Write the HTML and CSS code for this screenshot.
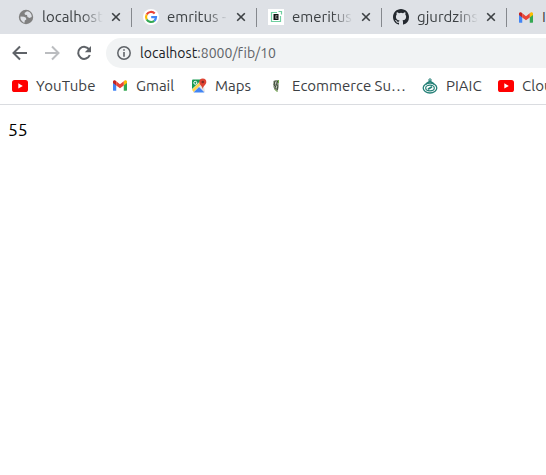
FILE: index.html
```html
<!DOCTYPE html>
<html lang="en">
<head>
<meta charset="utf-8">
<title>localhost:8000/fib/10</title>
<link rel="stylesheet" href="styles.css">
</head>
<body>
<svg width="0" height="0" class="defs">
  <symbol id="close" viewBox="0 0 10 10"><path d="M1.2 1.2l7.6 7.6M8.8 1.2L1.2 8.8" fill="none" stroke="#3c4043" stroke-width="1.600"/></symbol>
  <symbol id="gmail" viewBox="0 0 16 12"><path d="M0 1.5V11a1 1 0 0 0 1 1h2.7V4z" fill="#4285f4"/><path d="M16 1.5V11a1 1 0 0 1-1 1h-2.700V4z" fill="#34a853"/><path d="M12.300 1.200V6L16 3.200V1.700C16 .1 14.200-.5 13 .5z" fill="#fbbc04"/><path d="M0 3.200L3.700 6V1.200L3 .5C1.800-.5 0 .1 0 1.700z" fill="#c5221f"/><path d="M3.700 1.200V6L8 9.200 12.300 6V1.200L8 4.500z" fill="#ea4335"/></symbol>
  <symbol id="youtube" viewBox="0 0 16 12"><rect width="16" height="12" rx="2.600" fill="#f00"/><path d="M6.300 3.300v5.200L10.800 6z" fill="#fff"/></symbol>
</svg>
<div class="tabs">
  <div class="tab">
    <svg class="fav" viewBox="0 0 16 16"><circle cx="8" cy="8" r="7.200" fill="#808080"/><path d="M2.500 7.500L6 7.800l2 1 .3 1.700-1.500 1-.3 2.300C3.800 13 2 10 2.500 7.500z M9 2.300L6.500 4l.5 1.800 2 .2.500 2 2 1 2.200-1C14 5 11.500 2.500 9 2.300z" fill="#dee1e6"/></svg>
    <span class="title">localhost</span><svg class="close"><use href="#close"/></svg>
  </div>
  <div class="tab">
    <svg class="fav" viewBox="0 0 16 16"><circle cx="8" cy="8" r="8" fill="#fff"/><g fill="none" stroke-width="2.200"><path d="M11.700 4.500A5 5 0 0 0 3.700 5.500" stroke="#ea4335"/><path d="M3.700 5.500a5 5 0 0 0 0 5" stroke="#fbbc05"/><path d="M3.700 10.500a5 5 0 0 0 7.600 1.300" stroke="#34a853"/><path d="M11.300 11.800A5 5 0 0 0 13 8.200H8.200" stroke="#4285f4"/></g></svg>
    <span class="title">emritus -</span><svg class="close"><use href="#close"/></svg>
  </div>
  <div class="tab">
    <svg class="fav" viewBox="0 0 16 16"><path fill="#fff" d="M0 0h16v16H0z"/><path d="M9 3.500H3.500v9h9V7M10.500 2.500h3v3" fill="none" stroke="#6fcfa0" stroke-width="1.200"/><path d="M5.500 5h5v6h-5z" fill="#111"/><path d="M9.500 6.500H7.700v3h1.800M7.700 8h1.600" fill="none" stroke="#aaa" stroke-width=".7"/></svg>
    <span class="title">emeritus</span><svg class="close"><use href="#close"/></svg>
  </div>
  <div class="tab">
    <svg class="fav" viewBox="0 0 16 16"><path fill="#24292f" d="M8 0C3.580 0 0 3.580 0 8c0 3.540 2.290 6.530 5.470 7.590.4.070.550-.170.550-.380 0-.190-.010-.820-.010-1.490-2.010.370-2.530-.490-2.690-.940-.090-.230-.480-.940-.820-1.130-.280-.150-.680-.520-.010-.530.630-.010 1.080.580 1.230.820.720 1.210 1.870.870 2.330.660.070-.520.280-.870.510-1.070-1.780-.200-3.640-.890-3.640-3.950 0-.870.310-1.590.820-2.150-.080-.200-.360-1.020.080-2.120 0 0 .670-.210 2.200.820a7.600 7.600 0 0 1 4 0c1.530-1.040 2.200-.820 2.200-.820.440 1.100.160 1.920.080 2.120.510.560.820 1.270.820 2.150 0 3.070-1.870 3.750-3.650 3.950.290.250.540.730.540 1.480 0 1.070-.010 1.930-.010 2.200 0 .210.150.460.550.380A8.010 8.010 0 0 0 16 8c0-4.420-3.580-8-8-8z"/></svg>
    <span class="title">gjurdzins</span><svg class="close"><use href="#close"/></svg>
  </div>
  <div class="tab last">
    <svg class="fav mail"><use href="#gmail"/></svg>
    <span class="title plain">I</span>
  </div>
</div>
<div class="toolbar">
  <svg class="nav" viewBox="0 0 16 16"><path d="M15 8H2M8 1.500L1.500 8 8 14.500" fill="none" stroke="#5f6368" stroke-width="2"/></svg>
  <svg class="nav" viewBox="0 0 16 16"><path d="M1 8h13M8 1.500L14.500 8 8 14.500" fill="none" stroke="#bbbdc0" stroke-width="2"/></svg>
  <svg class="nav" viewBox="0 0 16 16"><path d="M13.300 4.700A6 6 0 1 0 13.800 10" fill="none" stroke="#5f6368" stroke-width="2"/><path d="M15 1v6.200H8.800z" fill="#5f6368"/></svg>
  <div class="omnibox">
    <svg class="info" viewBox="0 0 14 14"><circle cx="7" cy="7" r="6.200" fill="none" stroke="#5f6368" stroke-width="1.500"/><path d="M6.200 3.300h1.600v1.500H6.200zM6.200 6h1.600v4.700H6.200z" fill="#5f6368"/></svg>
    <span class="url"><span class="host">localhost</span>:8000/fib/10</span>
  </div>
</div>
<div class="bookmarks">
  <div class="bm b1"><svg class="bmi yt"><use href="#youtube"/></svg><span>YouTube</span></div>
  <div class="bm b2"><svg class="bmi gm"><use href="#gmail"/></svg><span>Gmail</span></div>
  <div class="bm b3"><svg class="bmi" viewBox="0 0 16 16"><path d="M1.500 12.500L12 2.500l2 11.500H3z" fill="#e4e4e4"/><path d="M2.500 14.500L8 9l5.500 5.500z" fill="#4285f4"/><path d="M1 11.500L10 3l1.500 2-9 9z" fill="#ffd34d"/><path d="M1 2.500Q1 1.500 2 1.500h9L1 11z" fill="#189b53"/><circle cx="4.300" cy="4.800" r="1.500" fill="none" stroke="#fff"/><path d="M11.700 11C11 7.500 8.300 6.500 8.300 4a3.500 3.500 0 0 1 7 0c0 2.500-2.900 3.500-3.600 7z" fill="#df4333"/><circle cx="11.800" cy="4" r="1.300" fill="#822b24"/></svg><span>Maps</span></div>
  <div class="bm b4"><svg class="bmi" viewBox="0 0 16 16"><path d="M5.300 3l2.200-1 3 0 .3 7-1.300 4.500-2.500-1.500-1.700-3z" fill="#8b9683"/><path d="M7 3L6 7l1.500 1L7 11M9.700 3L8.500 6l1 2-.3 4" fill="none" stroke="#323b30" stroke-width=".9"/><path d="M10.500 2v3M6.500 11l3 3" stroke="#72ad49"/><path d="M7.700 4v2M9 8l-1 2" stroke="#dce5d4" stroke-width=".8"/></svg><span>Ecommerce Su…</span></div>
  <div class="bm b5"><svg class="bmi" viewBox="0 0 16 16"><g fill="none" stroke="#258077"><circle cx="8" cy="2" r="1.200"/><path d="M4 6L8 3.300 12 6" stroke-width="1.600"/><ellipse cx="8" cy="10" rx="6.800" ry="5" stroke-width="1.300"/><ellipse cx="8" cy="10" rx="4.300" ry="2.800" stroke-width="1.200"/><path d="M6 11.300l4-2.600" stroke-width="1.700"/></g></svg><span>PIAIC</span></div>
  <div class="bm b6"><svg class="bmi yt"><use href="#youtube"/></svg><span>Clou</span></div>
</div>
<main class="page">55</main>
</body>
</html>
```
FILE: styles.css
```css
* { box-sizing: border-box; }
body {
  margin: 0;
  height: 475px;
  overflow: hidden;
  background: #fff;
  color: #3c4043;
  font: 15px/20px Ubuntu, "Noto Sans", sans-serif;
}
svg { display: block; flex: none; }
.defs { position: absolute; }
.tabs {
  display: flex;
  height: 34px;
  padding-left: 7px;
  background: #dee1e6;
  overflow: hidden;
}
.tab {
  display: flex;
  flex: none;
  align-items: center;
  position: relative;
  width: 125px;
  padding-left: 11px;
}
.last { flex: 1; width: auto; min-width: 0; }
.tab::after {
  content: "";
  position: absolute;
  right: 0;
  top: 8px;
  width: 1px;
  height: 19px;
  background: #85888d;
}
.last::after { display: none; }
.fav { width: 16px; height: 16px; }
.mail { width: 14px; height: 11px; margin: 0 1px; }
.title {
  width: 61px;
  margin-left: 8px;
  overflow: hidden;
  white-space: nowrap;
  -webkit-mask-image: linear-gradient(90deg, #000 65%, transparent);
  mask-image: linear-gradient(90deg, #000 65%, transparent);
}
.plain { width: auto; mask-image: none; -webkit-mask-image: none; }
.close { width: 10px; height: 10px; margin-left: 8px; }
.toolbar {
  display: flex;
  align-items: center;
  gap: 16px;
  height: 38px;
  padding-left: 12px;
}
.nav { width: 16px; height: 16px; }
.omnibox {
  display: flex;
  align-items: center;
  flex: 1;
  height: 30px;
  margin-left: -2px;
  padding-left: 11px;
  border-radius: 15px 0 0 15px;
  background: #f1f3f4;
}
.info { width: 14px; height: 14px; }
.url {
  margin-left: 9px;
  color: #5f6368;
  font-size: 14px;
  letter-spacing: .03px;
  font-variant-ligatures: none;
  white-space: nowrap;
}
.host { color: #202124; }
.bookmarks {
  display: flex;
  height: 33px;
  padding: 0 0 5px 12px;
  align-items: center;
  border-bottom: 1px solid #dadce0;
  overflow: hidden;
}
.bm { display: flex; flex: none; align-items: center; white-space: nowrap; }
.bmi { width: 16px; height: 16px; margin-right: 8px; }
.yt { height: 12px; }
.gm { width: 14px; height: 11px; margin: 0 9px 0 1px; }
.b1 { width: 100px; letter-spacing: .1px; }
.b2 { width: 79px; }
.b3 { width: 77px; }
.b4 { width: 154px; }
.b5 { width: 76px; }
.page {
  padding: 15px 8px;
  color: #000;
  font-size: 17.5px;
}
```
